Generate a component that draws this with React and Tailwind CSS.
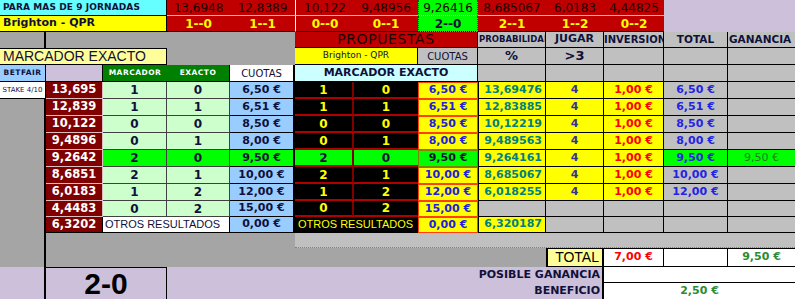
import React from "react";

const C = ({ className = "", children }) => (
  <div className={"flex items-center justify-center overflow-hidden whitespace-nowrap " + className}>
    {children}
  </div>
);

const rows = [
  { b: "13,695", m: "1", e: "0", q: "6,50 €", p: "13,69476", total: "6,50 €" },
  { b: "12,839", m: "1", e: "1", q: "6,51 €", p: "12,83885", total: "6,51 €" },
  { b: "10,122", m: "0", e: "0", q: "8,50 €", p: "10,12219", total: "8,50 €" },
  { b: "9,4896", m: "0", e: "1", q: "8,00 €", p: "9,489563", total: "8,00 €" },
  { b: "9,2642", m: "2", e: "0", q: "9,50 €", p: "9,264161", total: "9,50 €", win: true },
  { b: "8,6851", m: "2", e: "1", q: "10,00 €", p: "8,685067", total: "10,00 €" },
  { b: "6,0183", m: "1", e: "2", q: "12,00 €", p: "6,018255", total: "12,00 €" },
  { b: "4,4483", m: "0", e: "2", q: "15,00 €", p: null },
];

const top = [
  ["13,6948", "1--0"],
  ["12,8389", "1--1"],
  ["10,122", "0--0"],
  ["9,48956", "0--1"],
  ["9,26416", "2--0", true],
  ["8,685067", "2--1"],
  ["6,0183", "1--2"],
  ["4,44825", "0--2"],
];

export default function App() {
  return (
    <div className="w-[795px] h-[299px] overflow-hidden bg-[#a5a5a5] font-['DejaVu_Sans',sans-serif]">
      <div className="grid grid-cols-[46px_57px_64px_63px_65px_59px_64px_60px_68px_58px_60px_64px_67px] grid-rows-[16px_16px_16px_17px_17px_17px_17px_17px_17px_17px_17px_17px_16px_16px_15px_19px_16px_16px]">
        {/* Row 1 */}
        <C className="col-span-3 bg-[#66ffff] border-r border-b border-black justify-start pl-[3px] text-[9px] font-bold text-[#10103a] tracking-[0.1px]">
          PARA MAS DE 9 JORNADAS
        </C>
        {top.map(([n, , g], i) => (
          <C
            key={"t" + i}
            className={
              (g ? "bg-[#00ff00] border-x border-dotted border-[#006600] " : "bg-[#c00000] ") +
              (i === 2 ? "border-l border-l-white " : "") +
              "border-b border-b-[#f0b0b0] text-[12px] text-[#1a0000]"
            }
          >
            {n}
          </C>
        ))}
        <div className="col-span-2 row-span-2 bg-[#ccc0da]" />

        {/* Row 2 */}
        <C className="col-span-3 bg-[#ffff00] border-r border-b border-black justify-start pl-[3px] text-[11px] font-bold text-[#10103a]">
          Brighton - QPR
        </C>
        {top.map(([, s, g], i) => (
          <C
            key={"s" + i}
            className={
              (g ? "bg-[#00ff00] border-x border-dotted border-[#006600] text-[#10103a] " : "bg-[#c00000] text-[#ffff00] ") +
              (i === 2 ? "border-l border-l-white " : "") +
              "border-b border-b-black text-[12px] font-bold"
            }
          >
            {s}
          </C>
        ))}

        {/* Row 3 */}
        <div className="bg-[#a5a5a5] border-r-2 border-black" />
        <div className="col-span-4 bg-[#a5a5a5]" />
        <C className="col-span-3 bg-[#c00000] border-r border-b border-black text-[14px] text-[#1a0000] tracking-[0.6px]">
          PROPUESTAS
        </C>
        <C className="bg-[#c0c0c0] border-r border-b border-black justify-start pl-[1px] text-[8.5px] font-bold text-[#10103a]">
          PROBABILIDAD
        </C>
        <C className="bg-[#c0c0c0] border-r border-b border-black text-[11px] font-bold text-[#10103a]">JUGAR</C>
        <C className="bg-[#c0c0c0] border-r border-b border-black justify-start text-[10px] font-bold text-[#10103a]">
          INVERSION
        </C>
        <C className="bg-[#c0c0c0] border-r border-b border-black text-[10.5px] font-bold text-[#10103a]">TOTAL</C>
        <C className="bg-[#c0c0c0] border-b border-black justify-start pl-[1px] text-[10.5px] font-bold text-[#10103a]">
          GANANCIA
        </C>

        {/* Row 4 */}
        <C className="col-span-3 bg-[#ffff99] border-y border-r border-black justify-start pl-[3px] text-[14px] text-[#10103a] font-['Liberation_Sans',sans-serif]">
          MARCADOR EXACTO
        </C>
        <div className="col-span-2 bg-[#a5a5a5]" />
        <C className="col-span-2 bg-[#ffff00] border-r border-b border-black text-[9px] text-[#10103a]">
          Brighton - QPR
        </C>
        <C className="bg-[#c0c0c0] border-r border-b border-black text-[10px] text-[#10103a]">CUOTAS</C>
        <C className="bg-[#c0c0c0] border-r border-b border-black text-[13px] font-bold text-[#10103a]">%</C>
        <C className="bg-[#c0c0c0] border-r border-b border-black text-[13px] font-bold text-[#10103a]">&gt;3</C>
        <div className="bg-[#c0c0c0] border-r border-b border-black" />
        <div className="bg-[#c0c0c0] border-r border-b border-black" />
        <div className="bg-[#c0c0c0] border-b border-black" />

        {/* Row 5 */}
        <C className="bg-[#99ccff] border-r border-b border-black text-[7.5px] font-bold text-[#10103a] tracking-[0.5px]">
          BETFAIR
        </C>
        <div className="bg-[#ccc0da] border-r border-b border-black" />
        <C className="bg-[#008000] border-b border-black text-[7.5px] font-bold text-white tracking-[0.5px]">MARCADOR</C>
        <C className="bg-[#008000] border-r border-b border-black text-[7.5px] font-bold text-white tracking-[0.5px]">EXACTO</C>
        <C className="bg-white border-r-2 border-b border-black text-[10px] text-[#10103a]">CUOTAS</C>
        <C className="col-span-3 bg-[#ccffff] border-r border-b border-black text-[11px] font-bold text-[#10103a]">
          MARCADOR EXACTO
        </C>
        <div className="bg-[#c0c0c0] border-r border-b border-black" />
        <div className="bg-[#c0c0c0] border-r border-b border-black" />
        <div className="bg-[#c0c0c0] border-r border-b border-black" />
        <div className="bg-[#c0c0c0] border-r border-b border-black" />
        <div className="bg-[#c0c0c0] border-b border-black" />

        {/* Data rows */}
        {rows.map((r, i) => (
          <React.Fragment key={"r" + i}>
            {i === 0 && (
              <C className="bg-white border-r border-b border-black text-[7px] text-[#10103a]">STAKE 4/10</C>
            )}
            {i === 1 && <div className="row-span-10 bg-[#a5a5a5] border-r-2 border-black" />}
            <C className="bg-[#800000] border-r border-b border-[#d9bfbf] text-[11.5px] font-bold text-white">{r.b}</C>
            <C
              className={
                (r.win ? "bg-[#00ff00] " : "bg-[#ccffcc] ") +
                "border-r border-b border-[#404040] text-[12px] font-bold text-[#10103a]"
              }
            >
              {r.m}
            </C>
            <C
              className={
                (r.win ? "bg-[#00ff00] " : "bg-[#ccffcc] ") +
                "border-r border-b border-[#404040] text-[12px] font-bold text-[#10103a]"
              }
            >
              {r.e}
            </C>
            <C
              className={
                (r.win ? "bg-[#00ff00] " : "bg-[#99ccff] ") +
                "border-r-2 border-b border-black text-[11px] font-bold text-[#10103a]"
              }
            >
              {r.q}
            </C>
            <C
              className={
                (r.win ? "bg-[#00ff00] text-[#10103a] " : "bg-black text-[#ffff00] ") +
                "border-r-2 border-r-[#800000] border-b-2 border-b-[#b00000] text-[12px] font-bold"
              }
            >
              {r.m}
            </C>
            <C
              className={
                (r.win ? "bg-[#00ff00] text-[#10103a] " : "bg-black text-[#ffff00] ") +
                "border-b-2 border-b-[#b00000] text-[12px] font-bold"
              }
            >
              {r.e}
            </C>
            <C
              className={
                (r.win ? "bg-[#00ff00] text-[#10103a] border-[#808000] " : "bg-[#ffff00] text-[#2020e0] border-[#ff4000] ") +
                "border text-[11px] font-bold"
              }
            >
              {r.q}
            </C>
            {r.p ? (
              <C className="bg-[#ffff00] border-x border-b border-black justify-end pr-[3px] text-[11px] font-bold text-[#008080]">
                {r.p}
              </C>
            ) : (
              <div className="bg-[#c0c0c0] border-x border-b border-black" />
            )}
            {r.p ? (
              <>
                <C className="bg-[#ffff00] border-r border-b border-black text-[11px] font-bold text-[#333399]">4</C>
                <C className="bg-[#ffff00] border-r border-b border-black text-[11px] font-bold text-[#ff0000]">1,00 €</C>
                <C
                  className={
                    (r.win ? "bg-[#00ff00] " : "bg-[#c0c0c0] ") +
                    "border-r border-b border-black text-[11px] font-bold text-[#2323e6]"
                  }
                >
                  {r.total}
                </C>
                {r.win ? (
                  <C className="bg-[#00ff00] border-b border-black text-[11px] text-[#1f7a1f]">9,50 €</C>
                ) : (
                  <div className="bg-[#c0c0c0] border-b border-black" />
                )}
              </>
            ) : (
              <>
                <div className="bg-[#c0c0c0] border-r border-b border-black" />
                <div className="bg-[#c0c0c0] border-r border-b border-black" />
                <div className="bg-[#c0c0c0] border-r border-b border-black" />
                <div className="bg-[#c0c0c0] border-b border-black" />
              </>
            )}
          </React.Fragment>
        ))}

        {/* OTROS row */}
        <C className="bg-[#800000] border-r border-b border-black text-[11.5px] font-bold text-white">6,3202</C>
        <C className="col-span-2 bg-white border-r border-b border-black justify-start pl-[2px] text-[11px] text-[#10103a] font-['Liberation_Sans',sans-serif]">
          OTROS RESULTADOS
        </C>
        <C className="bg-[#99ccff] border-r-2 border-b border-black text-[11px] font-bold text-[#10103a]">0,00 €</C>
        <C className="col-span-2 bg-black border-b border-black justify-start pl-[3px] text-[11px] text-[#ffff00] font-['Liberation_Sans',sans-serif]">
          OTROS RESULTADOS
        </C>
        <C className="bg-[#ffff00] border border-[#ff4000] text-[11px] font-bold text-[#2020e0]">0,00 €</C>
        <C className="bg-[#ffff00] border-x border-b border-black justify-end pr-[3px] text-[11px] font-bold text-[#008080]">
          6,320187
        </C>
        <div className="bg-[#c0c0c0] border-r border-b border-black" />
        <div className="bg-[#c0c0c0] border-r border-b border-black" />
        <div className="bg-[#c0c0c0] border-r border-b border-black" />
        <div className="bg-[#c0c0c0] border-b border-black" />

        {/* Row 15 */}
        <div className="col-span-4 row-span-2 bg-[#a5a5a5]" />
        <div className="col-span-8 bg-[#c0c0c0] border-b border-dotted border-[#808080]" />

        {/* Row 16 */}
        <div className="col-span-4 bg-[#a5a5a5]" />
        <C className="bg-[#ffff99] border-x-2 border-y border-black justify-end pr-[3px] text-[14px] text-black font-['Liberation_Sans',sans-serif]">
          TOTAL
        </C>
        <C className="bg-white border-r border-y border-black text-[11px] font-bold text-[#ff0000]">7,00 €</C>
        <div className="bg-white border-r border-y border-black" />
        <C className="bg-white border-y border-black text-[11px] font-bold text-[#2e8b2e]">9,50 €</C>

        {/* Row 17-18 */}
        <div className="row-span-2 bg-[#ccc0da] border-r-2 border-black" />
        <C className="col-span-2 row-span-2 bg-[#ccc0da] border-r border-t border-black text-[30px] font-bold text-black font-['Liberation_Sans',sans-serif] leading-none">
          2-0
        </C>
        <C className="col-span-7 bg-[#ccc0da] border-r-2 border-black justify-end pr-[2px] text-[11px] font-bold text-[#10103a]">
          POSIBLE GANANCIA
        </C>
        <div className="col-span-3 bg-white border-b border-black" />
        <C className="col-span-7 bg-[#ccc0da] border-r-2 border-black justify-end pr-[2px] text-[11px] font-bold text-[#10103a]">
          BENEFICIO
        </C>
        <C className="col-span-3 bg-white text-[11px] font-bold text-[#2e8b2e]">2,50 €</C>
      </div>
    </div>
  );
}
